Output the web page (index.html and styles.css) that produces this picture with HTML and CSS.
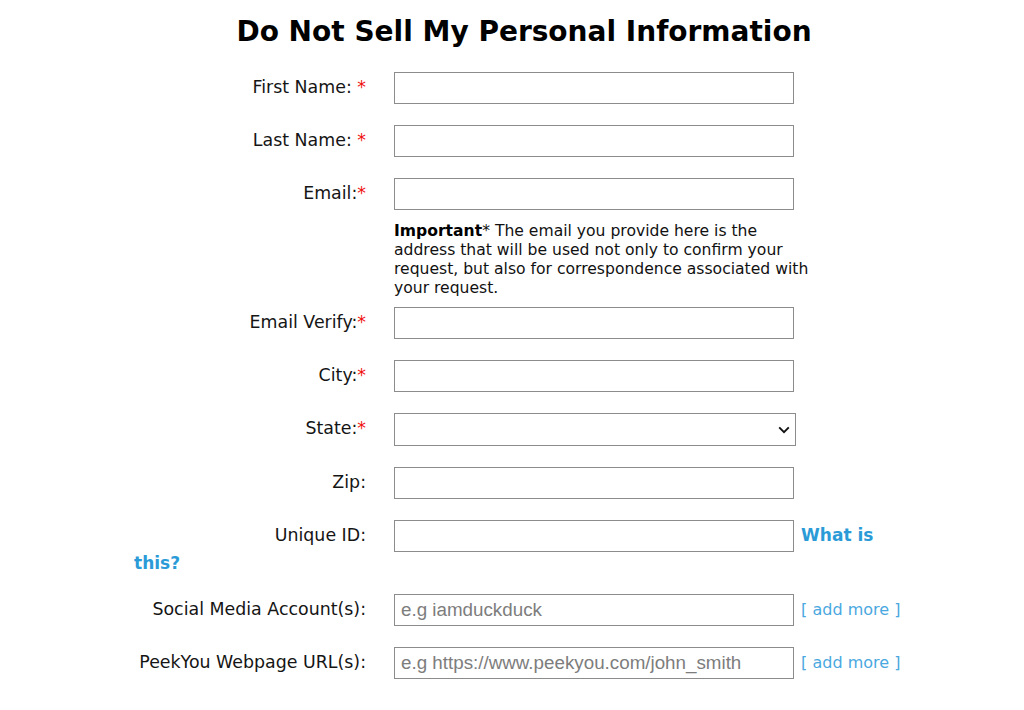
FILE: index.html
```html
<!DOCTYPE html>
<html lang="en">
<head>
<meta charset="utf-8">
<title>Do Not Sell My Personal Information</title>
<link rel="stylesheet" href="styles.css">
</head>
<body>
<div class="page">
  <h1 class="title">Do Not Sell My Personal Information</h1>
  <form class="form">
    <div class="row"><label class="label">First Name: <span class="req">*</span></label><input class="field" type="text"></div>
    <div class="row"><label class="label">Last Name: <span class="req">*</span></label><input class="field" type="text"></div>
    <div class="row row-email"><label class="label">Email:<span class="req">*</span></label><input class="field" type="text"></div>
    <p class="note"><b>Important</b>* The email you provide here is the address that will be used not only to confirm your request, but also for correspondence associated with your request.</p>
    <div class="row"><label class="label">Email Verify:<span class="req">*</span></label><input class="field" type="text"></div>
    <div class="row"><label class="label">City:<span class="req">*</span></label><input class="field" type="text"></div>
    <div class="row"><label class="label">State:<span class="req">*</span></label><span class="select-wrap"><select class="field select"><option></option></select><svg class="chevron" width="12" height="8" viewBox="0 0 12 8" aria-hidden="true"><path d="M1.2 1.4 L6 6.2 L10.8 1.4" fill="none" stroke="#111" stroke-width="1.9"/></svg></span></div>
    <div class="row"><label class="label">Zip:</label><input class="field" type="text"></div>
    <div class="row row-wrap"><label class="label">Unique ID:</label><input class="field" type="text"> <a class="what" href="#">What is this?</a></div>
    <div class="row"><label class="label">Social Media Account(s):</label><input class="field" type="text" placeholder="e.g iamduckduck"> <a class="more" href="#">[ add more ]</a></div>
    <div class="row"><label class="label">PeekYou Webpage URL(s):</label><input class="field" type="text" placeholder="e.g https://www.peekyou.com/john_smith"> <a class="more" href="#">[ add more ]</a></div>
  </form>
</div>
</body>
</html>
```
FILE: styles.css
```css
html, body {
  margin: 0;
  padding: 0;
  background: #fff;
}
body {
  font-family: "DejaVu Sans", Verdana, sans-serif;
  color: #111;
}
.page {
  width: 780px;
  margin-left: 134px;
}
.title {
  margin: 0;
  padding-top: 15px;
  font-size: 28px;
  line-height: 34px;
  text-align: center;
  font-weight: bold;
  color: #000;
}
.form {
  margin-top: 23px;
}
.row {
  font-size: 16px;
  line-height: 22px;
  margin-bottom: 21px;
}
.row-email {
  margin-bottom: 12px;
}
.row-wrap {
  margin-bottom: 19px;
}
.label {
  display: inline-block;
  width: 232px;
  margin-right: 28px;
  text-align: right;
  font-family: "DejaVu Sans", Verdana, sans-serif;
  font-size: 17.4px;
  color: #151515;
}
.req {
  color: #f01010;
}
.field {
  box-sizing: border-box;
  width: 400px;
  height: 32px;
  margin: 0;
  padding: 0 6px;
  border: 1px solid #8c8c8c;
  border-radius: 0;
  background: #fff;
  vertical-align: middle;
  font-family: "Liberation Sans", Arial, sans-serif;
  font-size: 18.8px;
  color: #222;
}
.field::placeholder {
  color: #7d7d7d;
}
.select-wrap {
  position: relative;
  display: inline-block;
  vertical-align: middle;
}
.select {
  display: block;
  width: 402px;
  height: 33px;
  -webkit-appearance: none;
  appearance: none;
}
.chevron {
  position: absolute;
  right: 6px;
  top: 13px;
  pointer-events: none;
}
.note {
  margin: 0 0 9px 260px;
  width: 420px;
  font-size: 15.6px;
  line-height: 19px;
  color: #111;
}
.note b {
  color: #000;
}
.what {
  color: #2b9bd8;
  font-weight: bold;
  font-size: 17px;
  text-decoration: none;
  margin-left: 2px;
}
.more {
  color: #4aa8e0;
  font-size: 16px;
  text-decoration: none;
  margin-left: 2px;
}
```
